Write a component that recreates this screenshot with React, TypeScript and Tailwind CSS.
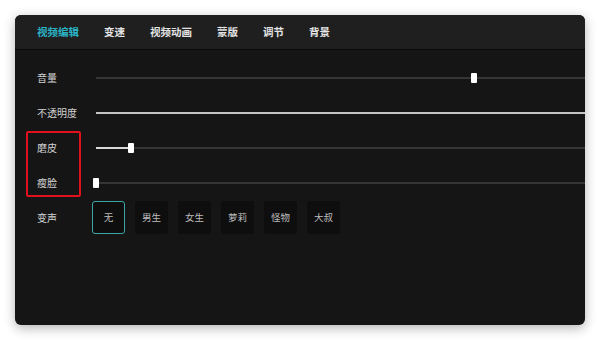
import React from 'react';

const tabs = ['视频编辑', '变速', '视频动画', '蒙版', '调节', '背景'];
const voices = ['无', '男生', '女生', '萝莉', '怪物', '大叔'];

type SliderProps = {
  label: string;
  thumb: number | null;
  fill: 'none' | 'thumb' | 'all';
};

const sliders: SliderProps[] = [
  {label: '音量', thumb: 378, fill: 'none'},
  {label: '不透明度', thumb: null, fill: 'all'},
  {label: '磨皮', thumb: 35, fill: 'thumb'},
  {label: '瘦脸', thumb: 0, fill: 'thumb'},
];

const Slider: React.FC<SliderProps> = ({label, thumb, fill}) => {
  return (
    <div className="flex items-center h-[35px]">
      <span className="w-[59px] shrink-0 text-[10px] text-[#d2d2d2]">{label}</span>
      <div className="relative flex-1 h-[12px] -mr-[12px]">
        <div
          className={`absolute left-0 right-0 top-[5px] h-[2px] ${
            fill === 'all' ? 'bg-[#c4c4c4]' : 'bg-[#353535]'
          }`}
        />
        {fill === 'thumb' && thumb !== null && (
          <div
            className="absolute left-0 top-[5px] h-[2px] bg-[#d8d8d8]"
            style={{width: thumb}}
          />
        )}
        {thumb !== null && (
          <div
            className="absolute top-[1px] w-[6px] h-[10px] rounded-[1px] bg-white"
            style={{left: thumb - 3}}
          />
        )}
      </div>
    </div>
  );
};

const App: React.FC = () => {
  return (
    <div
      className="w-[600px] h-[340px] bg-white p-[15px]"
      style={{fontFamily: '"Noto Sans CJK SC", "Noto Sans", sans-serif'}}
    >
      <div className="relative w-[570px] h-[310px] rounded-[6px] overflow-hidden bg-[#151515] shadow-[0_3px_12px_rgba(0,0,0,0.3)]">
        {/* 顶部标签 */}
        <div className="flex items-center h-[35px] pl-[22px] gap-[25px] bg-[#1f1f1f] border-b border-[#0b0b0b]">
          {tabs.map((tab, i) => (
            <span
              key={tab}
              className={`text-[10.5px] font-semibold ${
                i === 0 ? 'text-[#2bb3c6]' : 'text-[#e4e4e4]'
              }`}
            >
              {tab}
            </span>
          ))}
        </div>

        <div className="flex flex-col pt-[10px] pl-[22px]">
          {sliders.map(s => (
            <Slider key={s.label} {...s} />
          ))}
          {/* 变声 */}
          <div className="flex items-center h-[35px]">
            <span className="w-[55px] shrink-0 text-[10px] text-[#d2d2d2]">变声</span>
            <div className="flex gap-[10px]">
              {voices.map((v, i) => (
                <div
                  key={v}
                  className={`flex items-center justify-center w-[33px] h-[33px] rounded-[3px] bg-[#0e0e0e] text-[9.5px] text-[#bdbdbd] ${
                    i === 0 ? 'border-[1.5px] border-[#3fa6a6]' : ''
                  }`}
                >
                  {v}
                </div>
              ))}
            </div>
          </div>
        </div>

        {/* 标注框 */}
        <div className="absolute left-[11px] top-[116px] w-[55px] h-[66px] border-2 border-[#e0101c] rounded-[2px]" />
      </div>
    </div>
  );
};

export default App;
